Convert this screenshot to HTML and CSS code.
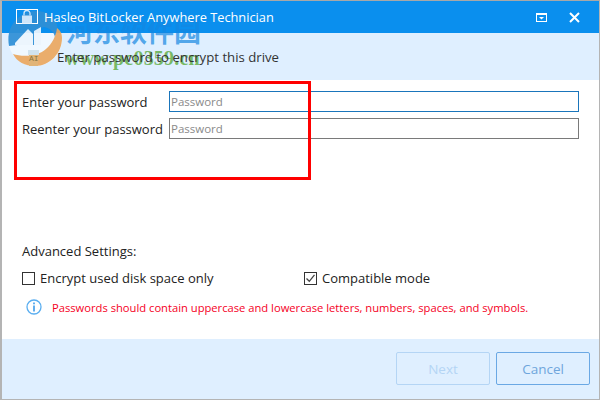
FILE: index.html
```html
<!DOCTYPE html>
<html lang="en">
<head>
    <meta charset="UTF-8">
    <title>Hasleo BitLocker Anywhere Technician</title>
    <link rel="stylesheet" href="styles.css">
</head>
<body>
    <div class="window">
        <div class="titlebar">
            <svg class="app-icon" width="22" height="16" viewBox="0 0 22 16">
                <rect x="0.500" y="0.500" width="21" height="14" fill="none" stroke="#fff"/>
                <rect x="6" y="6.500" width="10" height="8" fill="#cfe6fa"/>
                <path d="M8 6.500V4.500a3 3 0 0 1 6 0v2" fill="none" stroke="#cfe6fa" stroke-width="1.300"/>
            </svg>
            <span class="title">Hasleo BitLocker Anywhere Technician</span>
            <svg class="win-btn" width="11" height="9" viewBox="0 0 11 9">
                <rect x="0.500" y="0.500" width="10" height="8" fill="none" stroke="#fff"/>
                <path d="M0 1.500h11" stroke="#fff"/>
                <path d="M3 4h5L5.500 6.500z" fill="#fff"/>
            </svg>
            <svg class="win-btn close-btn" width="11" height="11" viewBox="0 0 11 11">
                <path d="M1 1l9 9M10 1l-9 9" stroke="#fff" stroke-width="2"/>
            </svg>
        </div>

        <div class="header">
            <span class="header-text">Enter password to encrypt this drive</span>
        </div>

        <div class="content">
            <div class="field-row">
                <label for="pass1">Enter your password</label>
                <input class="focused" type="text" id="pass1" placeholder="Password">
            </div>
            <div class="field-row">
                <label for="pass2">Reenter your password</label>
                <input type="text" id="pass2" placeholder="Password">
            </div>

            <div class="advanced">
                <div class="advanced-title">Advanced Settings:</div>
                <div class="options">
                    <div class="option">
                        <span class="checkbox"></span>
                        <span>Encrypt used disk space only</span>
                    </div>
                    <div class="option">
                        <span class="checkbox">
                            <svg width="11" height="11" viewBox="0 0 11 11">
                                <path d="M1.500 5.500l2.800 2.800 5.200-6.500" fill="none" stroke="#444" stroke-width="1.300"/>
                            </svg>
                        </span>
                        <span>Compatible mode</span>
                    </div>
                </div>
                <div class="notice">
                    <svg width="16" height="16" viewBox="0 0 16 16">
                        <circle cx="8" cy="8" r="7" fill="none" stroke="#5aaef0" stroke-width="1.300"/>
                        <rect x="7.200" y="3.500" width="1.600" height="1.800" fill="#3b9bea"/>
                        <rect x="7.200" y="6.500" width="1.600" height="6" fill="#3b9bea"/>
                    </svg>
                    <span>Passwords should contain uppercase and lowercase letters, numbers, spaces, and symbols.</span>
                </div>
            </div>
        </div>

        <div class="footer">
            <button class="btn btn-disabled">Next</button>
            <button class="btn">Cancel</button>
        </div>
    </div>

    <!-- red annotation box and site watermark sit on top of the screenshot -->
    <div class="red-box"></div>
    <div class="watermark">
        <svg class="wm-logo" width="70" height="70" viewBox="0 0 70 70">
            <path d="M8.700 33A27 27 0 1 0 61.300 33z" fill="#fff" opacity="0.6"/>
            <path d="M9 46C5 26 20 11 36 11c11 0 19 6 21 14 1 4 0 8-2 12-1-5-5-9-11-10l-3 1v17H17l-8 1z" fill="#2f8fd6"/>
            <path d="M15 43l13-14 5 5v11H15z" fill="#eef6fd"/>
            <path d="M34 31l7-4v18h-7z" fill="#eef6fd"/>
            <path d="M57 28c4 3 5 6 5 10 0 15-12 28-27 28-10 0-18-4-22-12 9 3 24 3 33-5 6-5 10-13 11-21z" fill="#eba860"/>
            <rect x="29" y="50" width="9" height="16" fill="#e2b06c"/>
            <rect x="28" y="50" width="11" height="5" fill="#cfe2ee"/>
        </svg>
        <span class="wm-ai">AI</span>
        <span class="wm-cn">河东软件园</span>
        <span class="wm-url">www.pc0359.cn</span>
    </div>
</body>
</html>
```

FILE: styles.css
```css
html, body {
    margin: 0;
    padding: 0;
}
body {
    width: 600px;
    height: 400px;
    overflow: hidden;
    background: #fff;
    font-family: "Open Sans", "Noto Sans", sans-serif;
    font-size: 13px;
    color: #222;
    position: relative;
}
.window {
    box-sizing: border-box;
    width: 600px;
    height: 400px;
    display: flex;
    flex-direction: column;
    border-top: 1px solid #a8a8a8;
    border-left: 2px solid #b4b4b4;
    border-right: 1px solid #b4b4b4;
    border-bottom: 1px solid #b4b4b4;
}
.titlebar {
    height: 32px;
    background: #0a8fee;
    color: #fff;
    display: flex;
    align-items: center;
    padding-left: 14px;
    font-size: 12.800px;
}
/* these stay readable through the watermark */
.app-icon, .title, .header-text {
    position: relative;
    z-index: 2;
}
.app-icon {
    margin-right: 6px;
    flex: none;
}
.title {
    flex: 1;
}
.win-btn {
    flex: none;
}
.close-btn {
    margin-left: 22px;
    margin-right: 19px;
}
.header {
    height: 47px;
    background: #dfefff;
    display: flex;
    align-items: center;
    padding-left: 55px;
    font-size: 13.200px;
    color: #333;
}
.content {
    flex: 1;
    padding: 9px 20px 0 20px;
    display: flex;
    flex-direction: column;
}
.field-row {
    display: flex;
    align-items: center;
    height: 21px;
    margin-top: 2px;
    margin-bottom: 4px;
}
.field-row label {
    width: 147px;
    flex: none;
}
.field-row input {
    box-sizing: border-box;
    width: 410px;
    height: 21px;
    border: 1px solid #7a7a7a;
    padding: 0 1px;
    font-family: inherit;
    font-size: 11.500px;
    outline: none;
}
.field-row input::placeholder {
    color: #8a8a8a;
}
.field-row input.focused {
    border-color: #1a75bb;
}
.advanced {
    margin-top: 98px;
}
.advanced-title {
    height: 20px;
    line-height: 20px;
}
.options {
    display: flex;
    margin-top: 7px;
}
.option {
    display: flex;
    align-items: center;
    height: 20px;
}
.option:first-child {
    width: 282px;
}
.checkbox {
    box-sizing: border-box;
    width: 13px;
    height: 13px;
    border: 1px solid #333;
    margin-right: 5px;
    display: flex;
    align-items: center;
    justify-content: center;
}
.checkbox svg {
    flex: none;
}
.notice {
    display: flex;
    align-items: center;
    margin-top: 11px;
    padding-left: 4px;
    color: #f5001e;
    font-size: 11.200px;
}
.notice svg {
    margin-right: 10px;
    flex: none;
}
.footer {
    box-sizing: border-box;
    height: 60px;
    background: #dfefff;
    display: flex;
    justify-content: flex-end;
    align-items: flex-start;
    gap: 6px;
    padding: 13px 9px 0 0;
}
.btn {
    box-sizing: border-box;
    width: 94px;
    height: 33px;
    background: transparent;
    border: 1px solid #6aa8e4;
    border-radius: 2px;
    color: #6fa6dc;
    font-family: inherit;
    font-size: 13.500px;
    padding: 0;
}
.btn-disabled {
    border-color: #b4d5f5;
    color: #b4d5f5;
}
.red-box {
    position: absolute;
    box-sizing: border-box;
    left: 14px;
    top: 81px;
    width: 297px;
    height: 99px;
    border: 3px solid #f00;
}
.watermark {
    position: absolute;
    left: 0;
    top: 0;
    width: 300px;
    height: 80px;
    pointer-events: none;
}
.wm-logo {
    position: absolute;
    left: 0;
    top: 0;
    opacity: 0.92;
}
.wm-ai {
    position: absolute;
    left: 29px;
    top: 54px;
    font-family: "Liberation Mono", monospace;
    font-size: 8px;
    color: #8a7440;
}
.wm-cn {
    position: absolute;
    left: 66px;
    top: 13px;
    font-family: "Noto Sans CJK SC", sans-serif;
    font-size: 27px;
    line-height: 36px;
    font-weight: 700;
    color: rgba(20, 135, 225, 0.7);
}
.wm-url {
    position: absolute;
    left: 65px;
    top: 46px;
    font-family: "Liberation Serif", serif;
    font-size: 20px;
    line-height: 24px;
    font-weight: 700;
    letter-spacing: 0.200px;
    color: rgba(90, 170, 60, 0.8);
}
```
